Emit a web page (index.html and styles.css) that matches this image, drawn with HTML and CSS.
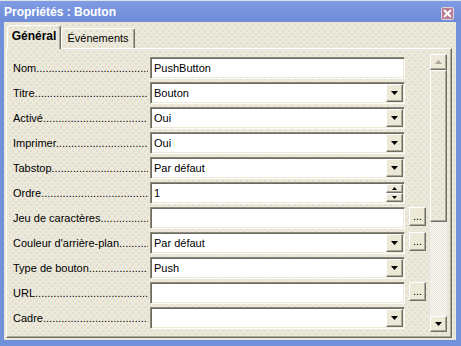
FILE: index.html
```html
<!DOCTYPE html>
<html lang="fr">
<head>
  <meta charset="UTF-8">
  <title>Propriétés : Bouton</title>
  <link rel="stylesheet" href="styles.css">
</head>
<body>
  <div class="window">
    <div class="titlebar">
      <span class="title">Propriétés : Bouton</span>
      <span class="close">
        <svg width="9" height="9" viewBox="0 0 9 9"><path d="M1 1L8 8M8 1L1 8" stroke="#fff" stroke-width="2"/></svg>
      </span>
    </div>

    <div class="client">
      <div class="tabs">
        <div class="tab active">Général</div>
        <div class="tab">Événements</div>
      </div>

      <div class="panel">
        <div class="rows">
          <div class="row">
            <span class="label">Nom</span>
            <span class="field"><span class="value">PushButton</span></span>
          </div>
          <div class="row">
            <span class="label">Titre</span>
            <span class="field"><span class="value">Bouton</span><span class="drop"><svg width="7" height="4"><polygon points="0,0 7,0 3.5,4" fill="#000"/></svg></span></span>
          </div>
          <div class="row">
            <span class="label">Activé</span>
            <span class="field"><span class="value">Oui</span><span class="drop"><svg width="7" height="4"><polygon points="0,0 7,0 3.5,4" fill="#000"/></svg></span></span>
          </div>
          <div class="row">
            <span class="label">Imprimer</span>
            <span class="field"><span class="value">Oui</span><span class="drop"><svg width="7" height="4"><polygon points="0,0 7,0 3.5,4" fill="#000"/></svg></span></span>
          </div>
          <div class="row">
            <span class="label">Tabstop</span>
            <span class="field"><span class="value">Par défaut</span><span class="drop"><svg width="7" height="4"><polygon points="0,0 7,0 3.5,4" fill="#000"/></svg></span></span>
          </div>
          <div class="row">
            <span class="label">Ordre</span>
            <span class="field">
              <span class="value">1</span>
              <span class="spin">
                <span class="spin-btn"><svg width="5" height="3"><polygon points="2.5,0 5,3 0,3" fill="#000"/></svg></span>
                <span class="spin-btn"><svg width="5" height="3"><polygon points="0,0 5,0 2.5,3" fill="#000"/></svg></span>
              </span>
            </span>
          </div>
          <div class="row">
            <span class="label">Jeu de caractères</span>
            <span class="field"><span class="value"></span></span>
            <span class="more">...</span>
          </div>
          <div class="row">
            <span class="label">Couleur d'arrière-plan</span>
            <span class="field"><span class="value">Par défaut</span><span class="drop"><svg width="7" height="4"><polygon points="0,0 7,0 3.5,4" fill="#000"/></svg></span></span>
            <span class="more">...</span>
          </div>
          <div class="row">
            <span class="label">Type de bouton</span>
            <span class="field"><span class="value">Push</span><span class="drop"><svg width="7" height="4"><polygon points="0,0 7,0 3.5,4" fill="#000"/></svg></span></span>
          </div>
          <div class="row">
            <span class="label">URL</span>
            <span class="field"><span class="value"></span></span>
            <span class="more">...</span>
          </div>
          <div class="row">
            <span class="label">Cadre</span>
            <span class="field"><span class="value"></span><span class="drop"><svg width="7" height="4"><polygon points="0,0 7,0 3.5,4" fill="#000"/></svg></span></span>
          </div>
        </div>

        <div class="scrollbar">
          <span class="sb-btn"><svg width="7" height="4"><polygon points="3.5,0 7,4 0,4" fill="#aca899"/></svg></span>
          <span class="thumb"></span>
          <span class="track"></span>
          <span class="sb-btn"><svg width="7" height="4"><polygon points="0,0 7,0 3.5,4" fill="#000"/></svg></span>
        </div>
      </div>
    </div>
  </div>
</body>
</html>
```

FILE: styles.css
```css
body {
  margin: 0;
  font-family: "Liberation Sans", Arial, sans-serif;
  font-size: 11px;
  color: #000;
}

.window {
  width: 461px;
  height: 346px;
  box-sizing: border-box;
  padding: 0 5px 6px 4px;
  background: #7390db;
  display: flex;
  flex-direction: column;
}

.titlebar {
  height: 22px;
  box-sizing: border-box;
  margin: 0 -5px 0 -4px;
  padding: 0 7px 0 4px;
  border-top: 1px solid #dde1ec;
  background: linear-gradient(#7f9be2, #6f8cda);
  display: flex;
  align-items: center;
  justify-content: space-between;
}

.title {
  color: #fff;
  font-weight: bold;
  font-size: 12px;
}

.close {
  width: 13px;
  height: 13px;
  box-sizing: border-box;
  margin-top: 4px;
  border: 1px solid #e4d2da;
  border-radius: 2px;
  background: #b97c92;
  display: flex;
  align-items: center;
  justify-content: center;
}

/* fond pointillé partagé */
.client,
.tab,
.thumb {
  background-color: #ece9d8;
  background-image:
    radial-gradient(circle at 1px 1px, #d0cfd2 0.6px, transparent 0.8px),
    radial-gradient(circle at 1px 1px, #d0cfd2 0.6px, transparent 0.8px);
  background-size: 6px 6px;
  background-position: 0 0, 3px 3px;
  background-attachment: fixed;
}

.client {
  flex: 1;
  padding: 0 4px 2px 2px;
  display: flex;
  flex-direction: column;
}

.tabs {
  height: 26px;
  padding-left: 1px;
  display: flex;
  align-items: flex-end;
}

.tab {
  height: 20px;
  box-sizing: border-box;
  border-top: 1px solid #fff;
  border-left: 1px solid #fff;
  border-right: 1px solid #716f64;
  box-shadow: inset -1px 0 #aca899;
  border-radius: 3px 3px 0 0;
  text-align: center;
  line-height: 18px;
  width: 74px;
}

.tab.active {
  position: relative;
  z-index: 1;
  width: 54px;
  height: 24px;
  margin-bottom: -1px;
  font-weight: bold;
  font-size: 12px;
  line-height: 20px;
}

.panel {
  flex: 1;
  border-top: 1px solid #fff;
  border-left: 1px solid #fff;
  border-right: 1px solid #716f64;
  border-bottom: 1px solid #716f64;
  box-shadow: inset -1px -1px #aca899;
  padding-right: 4px;
  display: flex;
}

.rows {
  padding: 8px 0 0 6px;
  display: flex;
  flex-direction: column;
  gap: 3px;
}

.row {
  height: 22px;
  display: flex;
  align-items: center;
}

.label {
  width: 135px;
  margin-right: 2px;
  white-space: nowrap;
  overflow: hidden;
}

.label::after {
  content: "..........................................................";
}

.field {
  width: 255px;
  height: 22px;
  box-sizing: border-box;
  border: 1px solid;
  border-color: #8a877b #fdfdfb #fdfdfb #8a877b;
  box-shadow: inset 1px 1px #6d6b61, inset -1px -1px #ece9d8;
  background: #fff;
  padding: 1px;
  display: flex;
}

.value {
  flex: 1;
  padding-left: 2px;
  line-height: 18px;
  white-space: nowrap;
}

.drop,
.sb-btn,
.spin-btn,
.more {
  box-sizing: border-box;
  background: #ece9d8;
  border-top: 1px solid #fff;
  border-left: 1px solid #fff;
  border-right: 1px solid #716f64;
  border-bottom: 1px solid #716f64;
  box-shadow: inset -1px -1px #aca899;
  display: flex;
  align-items: center;
  justify-content: center;
}

.drop {
  width: 17px;
}

.spin {
  width: 17px;
  display: flex;
  flex-direction: column;
}

.spin-btn {
  flex: 1;
}

.more {
  width: 17px;
  height: 19px;
  margin-left: 4px;
  align-self: flex-start;
  align-items: flex-end;
  line-height: 14px;
  padding-bottom: 2px;
}

.scrollbar {
  width: 17px;
  height: 278px;
  margin: 5px 0 0 4px;
  display: flex;
  flex-direction: column;
}

.sb-btn {
  height: 16px;
}

.thumb {
  height: 152px;
  box-sizing: border-box;
  border-top: 1px solid #fff;
  border-left: 1px solid #fff;
  border-right: 1px solid #716f64;
  border-bottom: 1px solid #716f64;
  box-shadow: inset -1px -1px #aca899;
}

.track {
  flex: 1;
  background: repeating-conic-gradient(#f8f6f2 0 25%, #ebe5de 0 50%) 0 0 / 2px 2px;
}
```
